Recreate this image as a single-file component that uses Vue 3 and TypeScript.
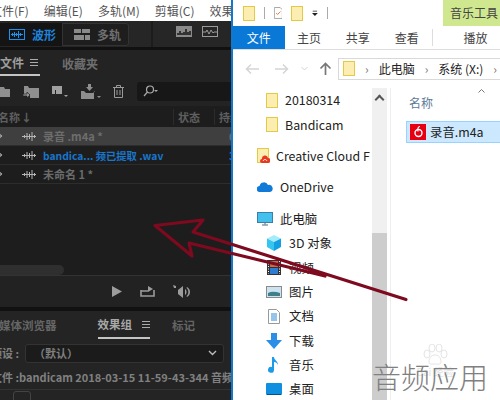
<script setup lang="ts">
const files = [
  { name: '录音 .m4a *', cls: 'sel', dur: '0' },
  { name: 'bandica... 频已提取 .wav', cls: 'blue', dur: '3' },
  { name: '未命名 1 *', cls: '', dur: '' },
]
</script>

<template>
  <div class="desk">
    <!-- audition window -->
    <div class="au">
      <div class="menu">
        <span>文件(F)</span><span>编辑(E)</span><span>多轨(M)</span><span>剪辑(C)</span><span>效果</span>
      </div>
      <div class="tools">
        <div class="seg on">
          <svg width="16" height="11" viewBox="0 0 16 11" fill="none" stroke="#1e90f0"><rect x=".5" y=".5" width="15" height="10" /><path d="M2 5.500h12M3.500 4v3M5.500 3v5M7.500 4v3M9.500 2v7M11.500 4v3" /></svg>
          <span>波形</span>
        </div>
        <div class="seg">
          <svg width="16" height="11" viewBox="0 0 16 11" fill="#8a8a8a"><rect width="7" height="4" /><rect x="8" width="8" height="4" /><rect y="6" width="10" height="5" /><rect x="11" y="6" width="5" height="5" /></svg>
          <span>多轨</span>
        </div>
        <i class="tsep"></i>
        <div class="meters">
          <svg width="16" height="11" viewBox="0 0 16 11"><rect width="16" height="11" fill="#8a8a8a" /><path d="M1 9V7h2V5h2v2h2V6h2V3h2v3h2V5h2v4z" fill="#333" /></svg>
          <svg width="16" height="11" viewBox="0 0 16 11" fill="none" stroke="#9a9a9a"><rect x=".5" y=".5" width="15" height="10" /><path d="M1 6h3l1-2 2 4 2-4 2 3 1-1h3" /></svg>
        </div>
      </div>
      <div class="panel">
        <div class="tabs">
          <span class="tab cur">文件<i class="burger"></i></span>
          <span class="tab fav">收藏夹</span>
        </div>
        <div class="ftools">
          <svg class="ic1" width="10" height="11" viewBox="0 0 10 11" fill="#8f8f8f"><path d="M0 1h4l1 2h5v8H0z" /></svg>
          <svg width="16" height="13" viewBox="0 0 16 13" fill="#8f8f8f"><path d="M1 1h4l1 2h10v10H7V9H1z" /><path d="M0 9h4V7l3 3-3 3v-2H0z" stroke="#1d1d1d" stroke-width=".6" /></svg>
          <svg width="17" height="13" viewBox="0 0 17 13" fill="#a0a0a0"><path d="M1 1h10v8H5V5H1z" /><path d="M1 5h3v4H1zM13 10h4l-2 2z" /></svg>
          <svg width="21" height="15" viewBox="0 0 21 15" fill="#8f8f8f"><path d="M8 0h3v3h2l-3.500 4L6 3h2z" /><path d="M1 7h3l2 2h7l2-2h-1v8H1z" /><path d="M17 12h4l-2 2z" /></svg>
          <svg width="11" height="13" viewBox="0 0 11 13" fill="none" stroke="#9a9a9a"><path d="M0 2.500h11M3.500 2V.5h4V2M1.500 3v9.500h8V3M4 5v5M7 5v5" /></svg>
          <div class="search">
            <svg width="16" height="12" viewBox="0 0 16 12" fill="none" stroke="#aaa" stroke-width="1.200"><circle cx="7" cy="4.500" r="3.500" /><path d="M4.500 7 1 11" /><path d="M11 5h4l-2 2z" fill="#aaa" stroke="none" /></svg>
          </div>
        </div>
        <div class="thead">
          <span class="th-name">名称<b>↓</b></span>
          <span class="th-state">状态</span>
          <span class="th-dur">持续时间</span>
        </div>
        <div v-for="f in files" :key="f.name" class="row" :class="f.cls">
          <i class="chev"></i>
          <svg class="wave" width="14" height="9" viewBox="0 0 14 9" fill="none" stroke="#b5b5b5"><path d="M0 4.500h14M2.500 3v3M5 1v7M7.500 2v5M10 0v9M12.500 3v3" /></svg>
          <span class="fname">{{ f.name }}</span>
          <span class="fdur">{{ f.dur }}</span>
        </div>
        <div class="list-space">
          <div class="hscroll"></div>
        </div>
        <div class="transport">
          <svg width="11" height="11" viewBox="0 0 11 11" fill="#9c9c9c"><path d="M1 0l10 5.500L1 11z" /></svg>
          <svg width="15" height="11" viewBox="0 0 15 11" fill="none" stroke="#9c9c9c" stroke-width="1.600"><path d="M1 4v6h13V4M1 5h7" /><path d="M8 0l5 3-5 3z" fill="#9c9c9c" stroke="none" /></svg>
          <svg width="20" height="14" viewBox="0 0 20 14" fill="#9c9c9c"><path d="M0 0l3 1v2H1zM5 5l5-4v12L5 9zM12 4c2 1 2 5 0 6zM14 2c4 2 4 8 0 10l-.5-1c2.500-2 2.500-6 0-8z" /></svg>
        </div>
      </div>
      <div class="gap"></div>
      <div class="panel2">
        <div class="tabs2">
          <span class="t2">媒体浏览器</span>
          <span class="t2 cur2">效果组<i class="burger"></i></span>
          <span class="t2">标记</span>
        </div>
        <div class="preset">
          <span class="plabel">预设 :</span>
          <div class="pselect">
            <span>（默认）</span>
            <svg width="9" height="6" viewBox="0 0 9 6" fill="none" stroke="#bbb" stroke-width="1.400"><path d="M1 1l3.500 3.500L8 1" /></svg>
          </div>
        </div>
        <div class="fileline">文件 :bandicam 2018-03-15 11-59-43-344 音频</div>
        <div class="power"></div>
      </div>
    </div>

    <!-- explorer window -->
    <div class="ex">
      <div class="qa">
        <i class="folder"></i><i class="sep"></i>
        <svg width="12" height="16" viewBox="0 0 12 16"><path d="M.5.500h8l3 3v12H.5z" fill="#fff" stroke="#888" /><path d="M3 8l2 2 4-4" fill="none" stroke="#e2622a" stroke-width="1.200" /></svg>
        <i class="folder"></i>
        <svg width="8" height="8" viewBox="0 0 8 8"><path d="M1 1h6v1H1zM0 4h8L4 8z" fill="#222" /></svg>
        <i class="sep"></i>
        <span class="music-tab">音乐工具</span>
      </div>
      <div class="ribbon">
        <span class="r-file">文件</span>
        <span class="r-i">主页</span>
        <span class="r-i">共享</span>
        <span class="r-i">查看</span>
        <span class="r-i play">播放</span>
      </div>
      <div class="addr">
        <svg width="14" height="12" viewBox="0 0 14 12" fill="none" stroke="#d5d5d5" stroke-width="1.500"><path d="M14 6H2M6 1.500 1.500 6 6 10.500" /></svg>
        <svg class="fw" width="14" height="12" viewBox="0 0 14 12" fill="none" stroke="#d5d5d5" stroke-width="1.500"><path d="M0 6h12M8 1.500 12.500 6 8 10.500" /></svg>
        <svg class="dn" width="7" height="5" viewBox="0 0 7 5" fill="none" stroke="#d5d5d5"><path d="M.5 1l3 3 3-3" /></svg>
        <svg class="upa" width="13" height="13" viewBox="0 0 13 13" fill="none" stroke="#777" stroke-width="1.700"><path d="M6.500 13V2M1.500 6.500l5-5 5 5" /></svg>
        <div class="crumbs">
          <i class="folder"></i>
          <b>›</b><span>此电脑</span><b>›</b><span>系统 (X:)</span><b>›</b>
        </div>
      </div>
      <div class="body">
        <div class="nav">
          <div class="nv sub"><i class="folder"></i>20180314</div>
          <div class="nv sub"><i class="folder"></i>Bandicam</div>
          <div class="nv top cc">
            <span class="ccfolder"><i class="folder"></i><svg class="ccbadge" width="10" height="8" viewBox="0 0 10 8"><path d="M2 8a2 2 0 0 1 0-4 3 3 0 0 1 6-1 2.500 2.500 0 0 1 0 5z" fill="#e8381e" /><path d="M3 6c1-2 3-2 4 0" stroke="#fff" fill="none" /></svg></span>Creative Cloud F
          </div>
          <div class="nv top od">
            <svg width="16" height="10" viewBox="0 0 16 10"><path d="M3 10a3 3 0 0 1-.5-6A4.500 4.500 0 0 1 11 3a3.500 3.500 0 0 1 2 7z" fill="#0f7ad8" /></svg>OneDrive
          </div>
          <div class="nv top pc">
            <svg width="16" height="14" viewBox="0 0 16 14"><rect x=".5" y=".5" width="15" height="10" fill="#43c0ee" stroke="#3a7fa8" /><path d="M5 13h6M8 11v2" stroke="#8a9aa5" stroke-width="1.500" /></svg>此电脑
          </div>
          <div class="nv sub">
            <svg class="ni" width="16" height="16" viewBox="0 0 16 16"><path d="M8 0l7 3.500L8 7 1 3.500z" fill="#a5ecfa" /><path d="M1 3.500L8 7v9l-7-4z" fill="#35c5ee" /><path d="M15 3.500L8 7v9l7-4z" fill="#14a0e0" /></svg>3D 对象
          </div>
          <div class="nv sub">
            <svg class="ni" width="14" height="15" viewBox="0 0 14 15"><rect width="14" height="15" fill="#333" /><rect x="3" y="1" width="8" height="6" fill="#c96a4c" /><rect x="3" y="8" width="8" height="6" fill="#2e7cd0" /><path d="M1.500 1v13M12.500 1v13" stroke="#fff" stroke-dasharray="1 1.500" /></svg>视频
          </div>
          <div class="nv sub">
            <svg class="ni" width="16" height="12" viewBox="0 0 16 12"><rect x=".5" y=".5" width="15" height="11" fill="#cde3ef" stroke="#8a8a8a" /><path d="M2 7c4-2 8-1 12 0v3H2z" fill="#3f7f8c" /></svg>图片
          </div>
          <div class="nv sub">
            <svg class="ni" width="12" height="15" viewBox="0 0 12 15"><path d="M.5.500h8l3 3v11H.5z" fill="#fff" stroke="#999" /><path d="M3 5h6M3 7h6M3 9h6M3 11h6" stroke="#2c8ad8" /></svg>文档
          </div>
          <div class="nv sub">
            <svg class="ni" width="16" height="16" viewBox="0 0 16 16"><path d="M5 0h6v7h5l-8 9-8-9h5z" fill="#2b8fe8" /></svg>下载
          </div>
          <div class="nv sub">
            <svg class="ni" width="12" height="16" viewBox="0 0 12 16"><path d="M4 0h2c0 3 4 4 4 8-1-2-2-3-4-3v8a3 3 0 1 1-2-3z" fill="#1e9be8" /></svg>音乐
          </div>
          <div class="nv sub">
            <svg class="ni" width="16" height="13" viewBox="0 0 16 13"><rect width="16" height="12" rx="1" fill="#0f8fe0" /><rect x="1" y="11" width="14" height="1" fill="#064f88" /></svg>桌面
          </div>
        </div>
        <div class="scroll"><span class="up"></span><div class="thumb"></div></div>
        <div class="main">
          <svg class="sort" width="7" height="4" viewBox="0 0 7 4" fill="none" stroke="#777"><path d="M.5 3.500l3-3 3 3" /></svg>
          <div class="col">名称</div>
          <div class="item">
            <svg width="16" height="16" viewBox="0 0 16 16"><rect width="16" height="16" fill="#e60012" /><circle cx="8.500" cy="9" r="3.500" fill="none" stroke="#fff" stroke-width="1.400" /><path d="M10 2.500c-2 0-2.500 2-2 5" fill="none" stroke="#fff" stroke-width="1.200" /></svg>
            <span>录音.m4a</span>
          </div>
        </div>
      </div>
    </div>

    <!-- hand-drawn arrow over both windows -->
    <svg class="arrow" width="500" height="400" viewBox="0 0 500 400" fill="none" stroke="#7d0a1e" stroke-width="3.200" stroke-linejoin="round" stroke-linecap="round">
      <path d="M406 299.500 193 232 203 220 155 225.500 192 256 189 243 325 276" />
    </svg>
    <!-- faint paw watermark under the caption -->
    <div class="wm">
      <svg width="26" height="22" viewBox="0 0 26 22" fill="none" stroke="#e4e4e4"><ellipse cx="5" cy="10" rx="3" ry="4" /><ellipse cx="10" cy="4" rx="3" ry="4" /><ellipse cx="17" cy="4" rx="3" ry="4" /><ellipse cx="22" cy="10" rx="3" ry="4" /><path d="M7 18c0-5 3-7 6-7s6 2 6 7c0 3-4 2-6 2s-6 1-6-2z" /></svg>
      <span>Bai 经验</span>
    </div>
    <span class="mark">音频应用</span>
  </div>
</template>

<style>
html,
body {
  margin: 0;
  overflow: hidden;
}
</style>

<style scoped>
.desk {
  position: relative;
  width: 500px;
  height: 400px;
  display: flex;
  overflow: hidden;
  font-family: "Noto Sans CJK SC", "Liberation Sans", sans-serif;
}
.au {
  width: 231px;
  flex: none;
  display: flex;
  flex-direction: column;
  background: #1d1d1d;
  overflow: hidden;
}
.menu {
  height: 21px;
  flex: none;
  background: #fff;
  display: flex;
  gap: 15px;
  margin-left: -10px;
  align-items: center;
  font-size: 12px;
  color: #555;
  white-space: nowrap;
}
.tools {
  height: 26px;
  flex: none;
  background: #262626;
  display: flex;
  align-items: center;
  border-bottom: 3px solid #111;
}
.seg {
  width: 62px;
  height: 23px;
  box-sizing: border-box;
  display: flex;
  align-items: center;
  gap: 7px;
  padding-left: 8px;
  background: #1e1e1e;
  border: 1px solid #333;
  font-size: 12px;
  font-weight: 700;
  color: #6f6f6f;
}
.seg + .seg {
  border-radius: 0 3px 3px 0;
  padding-left: 11px;
  width: 67px;
}
.seg.on {
  color: #1e84dc;
  background: #141414;
  border-color: #141414;
}
.tsep {
  width: 2px;
  height: 26px;
  margin-left: 22px;
  background: #1c1c1c;
}
.meters {
  display: flex;
  gap: 10px;
  margin-left: 23px;
  margin-top: -5px;
}
.panel {
  height: 257px;
  flex: none;
  display: flex;
  flex-direction: column;
}
.tabs {
  height: 26px;
  flex: none;
  display: flex;
  align-items: center;
  gap: 22px;
  background: #232323;
  font-size: 12px;
  font-weight: 700;
  color: #6f6f6f;
}
.tab.cur {
  width: 40px;
  height: 26px;
  box-sizing: border-box;
  display: flex;
  align-items: center;
  gap: 6px;
  color: #9c9c9c;
  border-bottom: 2px solid #c4c4c4;
}
.burger {
  width: 8px;
  height: 1px;
  display: inline-block;
  background: #aaa;
  box-shadow: 0 -3px 0 #aaa, 0 3px 0 #aaa;
}
.ftools {
  height: 30px;
  flex: none;
  display: flex;
  align-items: center;
  gap: 12px;
  background: #232323;
}
.ic1 {
  margin-right: 1px;
}
.search {
  flex: 1;
  height: 19px;
  margin-left: 1px;
  display: flex;
  align-items: center;
  padding-left: 6px;
  background: #171717;
  border-radius: 3px 0 0 3px;
}
.thead {
  height: 21px;
  flex: none;
  display: flex;
  align-items: center;
  margin-left: -2px;
  font-size: 11px;
  font-weight: 700;
  color: #5f5f5f;
  white-space: nowrap;
}
.th-name {
  width: 175px;
  flex: none;
}
.th-name b {
  margin-left: 1px;
}
.th-state {
  width: 41px;
  flex: none;
  padding-left: 4px;
  box-sizing: border-box;
  border-left: 1px solid #2c2c2c;
}
.th-dur {
  padding-left: 4px;
  border-left: 1px solid #2c2c2c;
}
.row {
  position: relative;
  height: 19px;
  flex: none;
  display: flex;
  align-items: center;
  border-bottom: 1px solid #2d2d2d;
  box-sizing: border-box;
  font-size: 11px;
  font-weight: 700;
  color: #6b6b6b;
}
.row.sel {
  background: #3f3f3f;
  color: #6d6d6d;
}
.row.blue {
  color: #1976cc;
  font-size: 10.300px;
}
/* twirl arrow, clipped by the window edge */
.chev {
  position: absolute;
  left: -5px;
  top: 6px;
  width: 5px;
  height: 5px;
  border-right: 1px solid #aaa;
  border-top: 1px solid #aaa;
  transform: rotate(45deg);
}
.wave {
  margin-left: 22px;
  margin-right: 7px;
  flex: none;
}
.fname {
  flex: 1;
  white-space: nowrap;
}
.fdur {
  width: 2px;
  flex: none;
  white-space: nowrap;
  overflow: hidden;
}
.list-space {
  flex: 1;
  display: flex;
  align-items: flex-end;
  border-bottom: 1px solid #333;
}
.hscroll {
  width: 64px;
  height: 10px;
  background: #2f2f2f;
  border-radius: 0 5px 5px 0;
}
.transport {
  height: 31px;
  flex: none;
  display: flex;
  align-items: center;
  gap: 18px;
  padding-left: 111px;
  background: #222;
}
.gap {
  height: 4px;
  flex: none;
  background: #111;
}
.panel2 {
  flex: 1;
  background: #242424;
}
.tabs2 {
  height: 28px;
  display: flex;
  align-items: center;
  margin-left: -1px;
  font-size: 11.500px;
  font-weight: 700;
  color: #666;
}
.t2 {
  margin-right: 41px;
  white-space: nowrap;
}
.t2.cur2 {
  display: flex;
  align-items: center;
  gap: 10px;
  height: 28px;
  margin-right: 22px;
  color: #a8a8a8;
  border-bottom: 2px solid #c4c4c4;
  box-sizing: border-box;
}
.preset {
  height: 24px;
  display: flex;
  align-items: center;
  margin-top: 2px;
  margin-left: -9px;
  font-size: 11px;
  font-weight: 700;
  color: #808080;
  white-space: nowrap;
}
.plabel {
  width: 34px;
  flex: none;
}
.pselect {
  width: 199px;
  height: 19px;
  display: flex;
  flex: none;
  align-items: center;
  justify-content: space-between;
  padding: 0 6px 0 8px;
  box-sizing: border-box;
  background: #1b1b1b;
  border: 1px solid #333;
  border-radius: 3px;
}
.fileline {
  height: 24px;
  margin-left: -9px;
  line-height: 24px;
  font-size: 11px;
  font-weight: 700;
  color: #808080;
  white-space: nowrap;
  border-bottom: 1px solid #333;
}
.power {
  width: 16px;
  height: 8px;
  margin: 1px 0 0 13px;
  border: 1px solid #444;
  border-radius: 3px 3px 0 0;
}
.ex {
  flex: 1;
  min-width: 0;
  display: flex;
  flex-direction: column;
  background: #fff;
  border-left: 2px solid #0f78d0;
  overflow: hidden;
  font-size: 12.400px;
  color: #222;
}
.qa {
  height: 26px;
  flex: none;
  display: flex;
  align-items: center;
  gap: 9px;
  padding-left: 10px;
}
.folder {
  width: 12px;
  height: 15px;
  display: inline-block;
  flex: none;
  box-sizing: border-box;
  background: #fbeeb0;
  border: 1px solid #e3c948;
}
.sep {
  width: 1px;
  height: 12px;
  background: #aaa;
}
.music-tab {
  height: 26px;
  line-height: 26px;
  margin-left: 106px;
  padding-left: 7px;
  width: 50px;
  white-space: nowrap;
  background: #cfe88f;
  color: #444;
  flex: none;
  font-size: 12px;
}
.ribbon {
  height: 23px;
  flex: none;
  display: flex;
  align-items: center;
  border-bottom: 1px solid #ddd;
  white-space: nowrap;
  font-size: 12px;
}
.r-file {
  width: 56px;
  height: 23px;
  line-height: 23px;
  text-align: center;
  background: #0a78d7;
  color: #fff;
}
.r-i {
  width: 53px;
  text-align: center;
  color: #444;
}
.r-i.play {
  border-left: 1px solid #ddd;
  margin-left: 1px;
  padding-left: 18px;
}
.addr {
  height: 38px;
  flex: none;
  display: flex;
  align-items: center;
  padding-left: 12px;
  box-sizing: border-box;
  padding-bottom: 1px;
  font-size: 12px;
}
.fw {
  margin-left: 16px;
}
.dn {
  margin-left: 12px;
}
.upa {
  margin-left: 11px;
}
.crumbs {
  flex: 1;
  height: 20px;
  margin-left: 6px;
  display: flex;
  align-items: center;
  gap: 10px;
  padding-left: 4px;
  margin-right: -8px;
  border: 1px solid #d9d9d9;
  border-right: 0;
  white-space: nowrap;
  overflow: hidden;
}
.crumbs b {
  font-weight: 400;
  color: #777;
}
.body {
  flex: 1;
  display: flex;
  min-height: 0;
}
.nav {
  width: 139px;
  flex: none;
  white-space: nowrap;
  overflow: hidden;
}
.nv {
  height: 24.400px;
  display: flex;
  align-items: center;
  gap: 7px;
}
.nv.sub {
  padding-left: 33px;
}
.nv.top {
  padding-left: 24px;
}
.nv.cc,
.nv.od,
.nv.pc {
  margin-top: 7px;
}
.nv .ni {
  width: 16px;
  flex: none;
}
.ccfolder {
  position: relative;
  display: inline-flex;
}
.ccbadge {
  position: absolute;
  right: -1px;
  bottom: 0;
}
.scroll {
  width: 15px;
  flex: none;
  display: flex;
  flex-direction: column;
  background: #f0f0f0;
}
.up {
  height: 145px;
  flex: none;
  position: relative;
}
.up::before {
  content: "";
  position: absolute;
  left: 4px;
  top: 8px;
  width: 5px;
  height: 5px;
  border-left: 2px solid #555;
  border-top: 2px solid #555;
  transform: rotate(45deg);
}
.thumb {
  flex: 1;
  background: #cdcdcd;
}
.main {
  flex: 1;
  position: relative;
  padding-left: 15px;
  border-left: 1px solid #eee;
  margin-left: 3px;
}
.sort {
  position: absolute;
  left: 87px;
  top: 1px;
}
.col {
  margin-top: 3px;
  margin-left: 3px;
  height: 24px;
  line-height: 24px;
  font-size: 12px;
  color: #5c7a96;
}
.item {
  height: 22px;
  margin-top: 6px;
  display: flex;
  align-items: center;
  gap: 4px;
  padding-left: 3px;
  box-sizing: border-box;
  background: #cce8ff;
  border: 1px solid #99d1ff;
  border-right: 0;
}
.arrow {
  position: absolute;
  left: 0;
  top: 0;
  pointer-events: none;
}
.wm {
  position: absolute;
  left: 400px;
  top: 344px;
  width: 70px;
  display: flex;
  flex-direction: column;
  align-items: center;
  font-size: 10px;
  line-height: 11px;
  color: #e2e2e2;
  white-space: nowrap;
}
.mark {
  position: absolute;
  left: 372px;
  top: 358px;
  font-size: 29px;
  font-weight: 300;
  line-height: 36px;
  color: #808080;
  white-space: nowrap;
}
</style>
